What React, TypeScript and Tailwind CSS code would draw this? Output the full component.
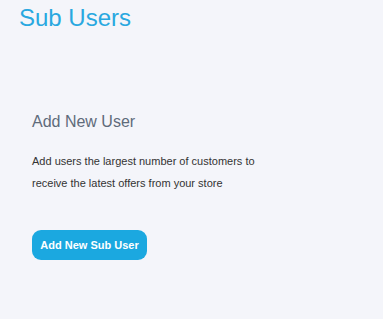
import React from 'react';

export default function App() {
    return (
        <div className="min-h-[319px] w-full bg-[#f4f5fa] font-['Liberation_Sans',Arial,sans-serif]">
            {/* Page title */}
            <h1 className="px-[19px] pt-[2px] text-[24px] leading-[32px] text-[#29a8e0]">Sub Users</h1>

            {/* Add user block */}
            <div className="px-8 pt-[76px]">
                <h2 className="text-[16px] leading-[24px] text-[#5f6b7a]">Add New User</h2>
                <p className="mt-[16px] max-w-[240px] text-[11px] leading-[22px] text-[#333333]">
                    Add users the largest number of customers to receive the latest offers from your store
                </p>
                <button className="mt-[36px] flex h-[30px] w-[115px] items-center justify-center rounded-[9px] bg-[#1ba8e0] text-[11px] font-bold text-white">
                    Add New Sub User
                </button>
            </div>
        </div>
    );
}
